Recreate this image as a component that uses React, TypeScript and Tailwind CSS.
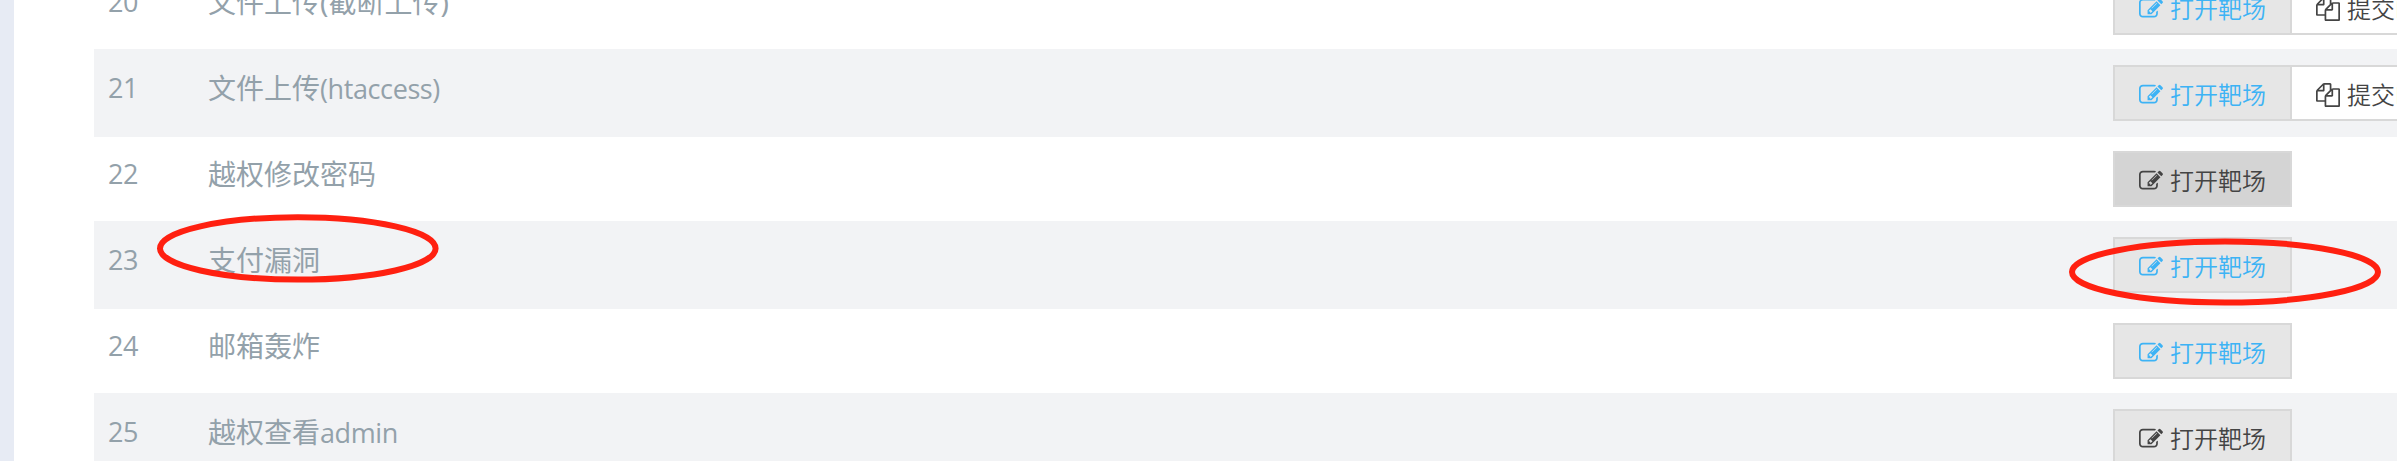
import clsx from "clsx";

type Lab = {
  id: number;
  title: string;
  latin?: string;
  tone: "link" | "dark" | "active";
  submit?: boolean;
};

const labs: Lab[] = [
  { id: 20, title: "文件上传(截断上传)", tone: "link", submit: true },
  { id: 21, title: "文件上传", latin: "(htaccess)", tone: "link", submit: true },
  { id: 22, title: "越权修改密码", tone: "active" },
  { id: 23, title: "支付漏洞", tone: "link" },
  { id: 24, title: "邮箱轰炸", tone: "link" },
  { id: 25, title: "越权查看", latin: "admin", tone: "dark" },
];

const tones = {
  link: "bg-[#e6e6e6] text-[#3db3f5]",
  dark: "bg-[#e6e6e6] text-[#444444]",
  active: "bg-[#d4d4d4] text-[#444444]",
};

function EditIcon() {
  return (
    <svg viewBox="0 0 1792 1792" className="size-6 shrink-0" fill="currentColor">
      <path d="M888 1184l116-116-152-152-116 116v56h96v96h56zm440-720q-16-16-33 1l-350 350q-17 17-1 33t33-1l350-350q17-17 1-33zm80 594v190q0 119-84.5 203.5t-203.5 84.5h-832q-119 0-203.5-84.5t-84.5-203.5v-832q0-119 84.5-203.5t203.5-84.5h832q63 0 117 25 15 7 18 23 3 17-9 29l-49 49q-14 14-32 8-23-6-45-6h-832q-66 0-113 47t-47 113v832q0 66 47 113t113 47h832q66 0 113-47t47-113v-126q0-13 9-22l64-64q15-15 35-7t20 29zm-96-738l288 288-672 672h-288v-288zm444 132l-92 92-288-288 92-92q28-28 68-28t68 28l152 152q28 28 28 68t-28 68z" />
    </svg>
  );
}

function FilesIcon() {
  return (
    <svg viewBox="0 0 1792 1792" className="size-6 shrink-0" fill="currentColor">
      <path d="M1696 384q40 0 68 28t28 68v1216q0 40-28 68t-68 28h-960q-40 0-68-28t-28-68v-288h-544q-40 0-68-28t-28-68v-672q0-40 20-88t48-76l408-408q28-28 76-48t88-20h416q40 0 68 28t28 68v328q68-40 128-40h416zm-544 213l-299 299h299v-299zm-640-384l-299 299h299v-299zm196 647l316-316v-416h-384v416q0 40-28 68t-68 28h-416v640h512v-256q0-40 20-88t48-76zm956 804v-1152h-384v416q0 40-28 68t-68 28h-416v640h896z" />
    </svg>
  );
}

function LabRow({ lab }: { lab: Lab }) {
  const striped = lab.id % 2 === 1;

  return (
    <div
      className={clsx(
        "flex shrink-0 items-start pl-3.5",
        striped ? "h-[88px] bg-[#f2f3f5] pt-4" : "h-[84px] pt-3.5"
      )}
    >
      <div className="mt-[5px] w-[100px] shrink-0 font-['Open_Sans',sans-serif] text-[27px] leading-[35px] font-[370] tracking-[-0.4px]">
        {lab.id}
      </div>
      <div className="mt-[5px] w-[1905px] shrink-0 text-[28px] leading-[36px]">
        {lab.title}
        {lab.latin && (
          <span className="font-['Open_Sans',sans-serif] text-[27px] font-[370] tracking-[-0.4px]">
            {lab.latin}
          </span>
        )}
      </div>
      <button
        className={clsx(
          "flex h-14 w-[179px] shrink-0 items-center gap-[7px] border-2 border-[#d8d8d8] pt-[3px] pl-6 text-[24px] leading-none font-[350] whitespace-nowrap",
          tones[lab.tone]
        )}
      >
        <EditIcon />
        打开靶场
      </button>
      {lab.submit && (
        <button className="-ml-0.5 flex h-14 w-[170px] shrink-0 items-center gap-[7px] border-2 border-[#d8d8d8] bg-white pt-[3px] pl-6 text-[24px] leading-none font-[350] whitespace-nowrap text-[#444444]">
          <FilesIcon />
          提交Flag
        </button>
      )}
    </div>
  );
}

export default function App() {
  return (
    <div className="relative flex h-[461px] w-[2397px] overflow-hidden bg-white font-['Noto_Sans','Noto_Sans_CJK_SC',sans-serif] text-[#93a1aa]">
      <div className="w-3.5 shrink-0 bg-[#e7ebf4]" />
      <div className="-mt-[35px] ml-20 flex min-w-0 flex-1 flex-col overflow-hidden">
        {labs.map((lab) => (
          <LabRow key={lab.id} lab={lab} />
        ))}
      </div>

      {/* Hand-drawn highlights over row 23 */}
      <svg
        className="pointer-events-none absolute inset-0"
        width="2397"
        height="461"
        fill="none"
        stroke="#ff2010"
        strokeWidth="6"
      >
        <ellipse cx="297.8" cy="248.4" rx="137.8" ry="31.2" />
        <ellipse cx="2225" cy="272" rx="153" ry="30.5" />
      </svg>
    </div>
  );
}
